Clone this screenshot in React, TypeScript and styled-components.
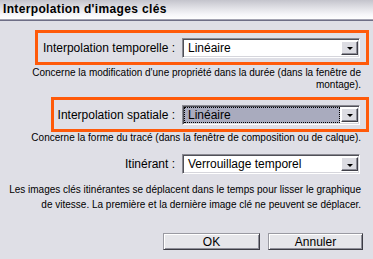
import React from "react";
import styled, { createGlobalStyle } from "styled-components";

const Global = createGlobalStyle`
  html, body { margin: 0; padding: 0; background: #dfdfe6; }
  #root { width: 373px; height: 259px; }
`;

const Window = styled.div`
  width: 373px;
  height: 259px;
  background: #dfdfe6;
  font-family: "Liberation Sans", Arial, sans-serif;
  color: #000;
  overflow: hidden;
  display: flex;
  flex-direction: column;
`;

const TitleBar = styled.div`
  flex: none;
  height: 20px;
  box-sizing: border-box;
  padding-left: 3px;
  padding-bottom: 1px;
  display: flex;
  align-items: center;
  background: linear-gradient(to bottom, #c4c4cc 0%, #dcdce2 35%, #f6f6f9 75%, #ffffff 100%);
  border-bottom: 1px solid #a4a4b2;
  box-shadow: 0 1px 0 #6e6e86;
  font-weight: bold;
  font-size: 12px;
  letter-spacing: 0.35px;
`;

const FieldBox = styled.div<{ $left: number; $top: number }>`
  flex: none;
  box-sizing: border-box;
  margin: ${(p) => p.$top}px 4px 0 ${(p) => p.$left}px;
  height: 35px;
  border: 3px solid #ff5a0a;
  display: flex;
  justify-content: flex-end;
  align-items: center;
  gap: 7px;
  padding-right: 6px;
`;

const FieldRow = styled.div<{ $top: number }>`
  flex: none;
  margin-top: ${(p) => p.$top}px;
  height: 20px;
  display: flex;
  justify-content: flex-end;
  align-items: center;
  gap: 7px;
  padding-right: 13px;
`;

const Label = styled.span`
  font-size: 12px;
  white-space: nowrap;
`;

const SelectBox = styled.div`
  position: relative;
  box-sizing: border-box;
  width: 178px;
  height: 20px;
  background: #fff;
  border: 1px solid;
  border-color: #8a8a92 #ffffff #ffffff #8a8a92;
  box-shadow: inset 1px 1px 0 #505058, inset -1px -1px 0 #d6d6dc;
  display: flex;
  align-items: stretch;
  padding: 1px;
`;

const Value = styled.div<{ $focused?: boolean }>`
  flex: 1;
  box-sizing: border-box;
  display: flex;
  align-items: center;
  padding-left: 4px;
  margin-right: 1px;
  font-size: 12px;
  white-space: nowrap;
  background: ${(p) => (p.$focused ? "#a9abbe" : "transparent")};
  outline: ${(p) => (p.$focused ? "1px dotted #000" : "none")};
  outline-offset: -1px;
`;

const ArrowButton = styled.div`
  flex: none;
  width: 17px;
  box-sizing: border-box;
  margin: 1px 0;
  background: #dcdce2;
  border: 1px solid;
  border-color: #ffffff #404048 #404048 #ffffff;
  box-shadow: inset -1px -1px 0 #8e8e98;
  display: flex;
  align-items: center;
  justify-content: center;
`;

const Arrow = styled.span`
  width: 0;
  height: 0;
  margin-top: 2px;
  border-left: 3px solid transparent;
  border-right: 3px solid transparent;
  border-top: 3px solid #000;
`;

const Hint = styled.div<{ $top: number; $lh: number }>`
  flex: none;
  margin-top: ${(p) => p.$top}px;
  padding-right: 12px;
  font-size: 10px;
  line-height: ${(p) => p.$lh}px;
  text-align: right;
  white-space: nowrap;
`;

const ButtonRow = styled.div`
  flex: none;
  margin-top: 21px;
  display: flex;
  justify-content: flex-end;
  gap: 8px;
  padding-right: 10px;
`;

const Button = styled.button<{ $w: number }>`
  width: ${(p) => p.$w}px;
  height: 17px;
  box-sizing: border-box;
  padding: 0;
  font-family: "Liberation Sans", Arial, sans-serif;
  font-size: 12px;
  color: #000;
  background: #e6e6ea;
  border: 1px solid;
  border-color: #9a9aa2 #3c3c44 #3c3c44 #9a9aa2;
  box-shadow: inset 1px 1px 0 #ffffff, inset -1px -1px 0 #8e8e98;
`;

function Select({ value, focused }: { value: string; focused?: boolean }) {
  return (
    <SelectBox>
      <Value $focused={focused}>{value}</Value>
      <ArrowButton>
        <Arrow />
      </ArrowButton>
    </SelectBox>
  );
}

export default function App() {
  return (
    <>
      <Global />
      <Window>
        <TitleBar>Interpolation d'images clés</TitleBar>

        <FieldBox $left={35} $top={10}>
          <Label>Interpolation temporelle :</Label>
          <Select value="Linéaire" />
        </FieldBox>
        <Hint $top={2} $lh={12}>
          Concerne la modification d'une propriété dans la durée (dans la fenêtre de
          <br />
          montage).
        </Hint>

        <FieldBox $left={51} $top={6}>
          <Label>Interpolation spatiale :</Label>
          <Select value="Linéaire" focused />
        </FieldBox>
        <Hint $top={0} $lh={12}>
          Concerne la forme du tracé (dans la fenêtre de composition ou de calque).
        </Hint>

        <FieldRow $top={10}>
          <Label>Itinérant :</Label>
          <Select value="Verrouillage temporel" />
        </FieldRow>

        <Hint $top={8} $lh={15}>
          Les images clés itinérantes se déplacent dans le temps pour lisser le graphique
          <br />
          de vitesse. La première et la dernière image clé ne peuvent se déplacer.
        </Hint>

        <ButtonRow>
          <Button $w={97}>OK</Button>
          <Button $w={95}>Annuler</Button>
        </ButtonRow>
      </Window>
    </>
  );
}
